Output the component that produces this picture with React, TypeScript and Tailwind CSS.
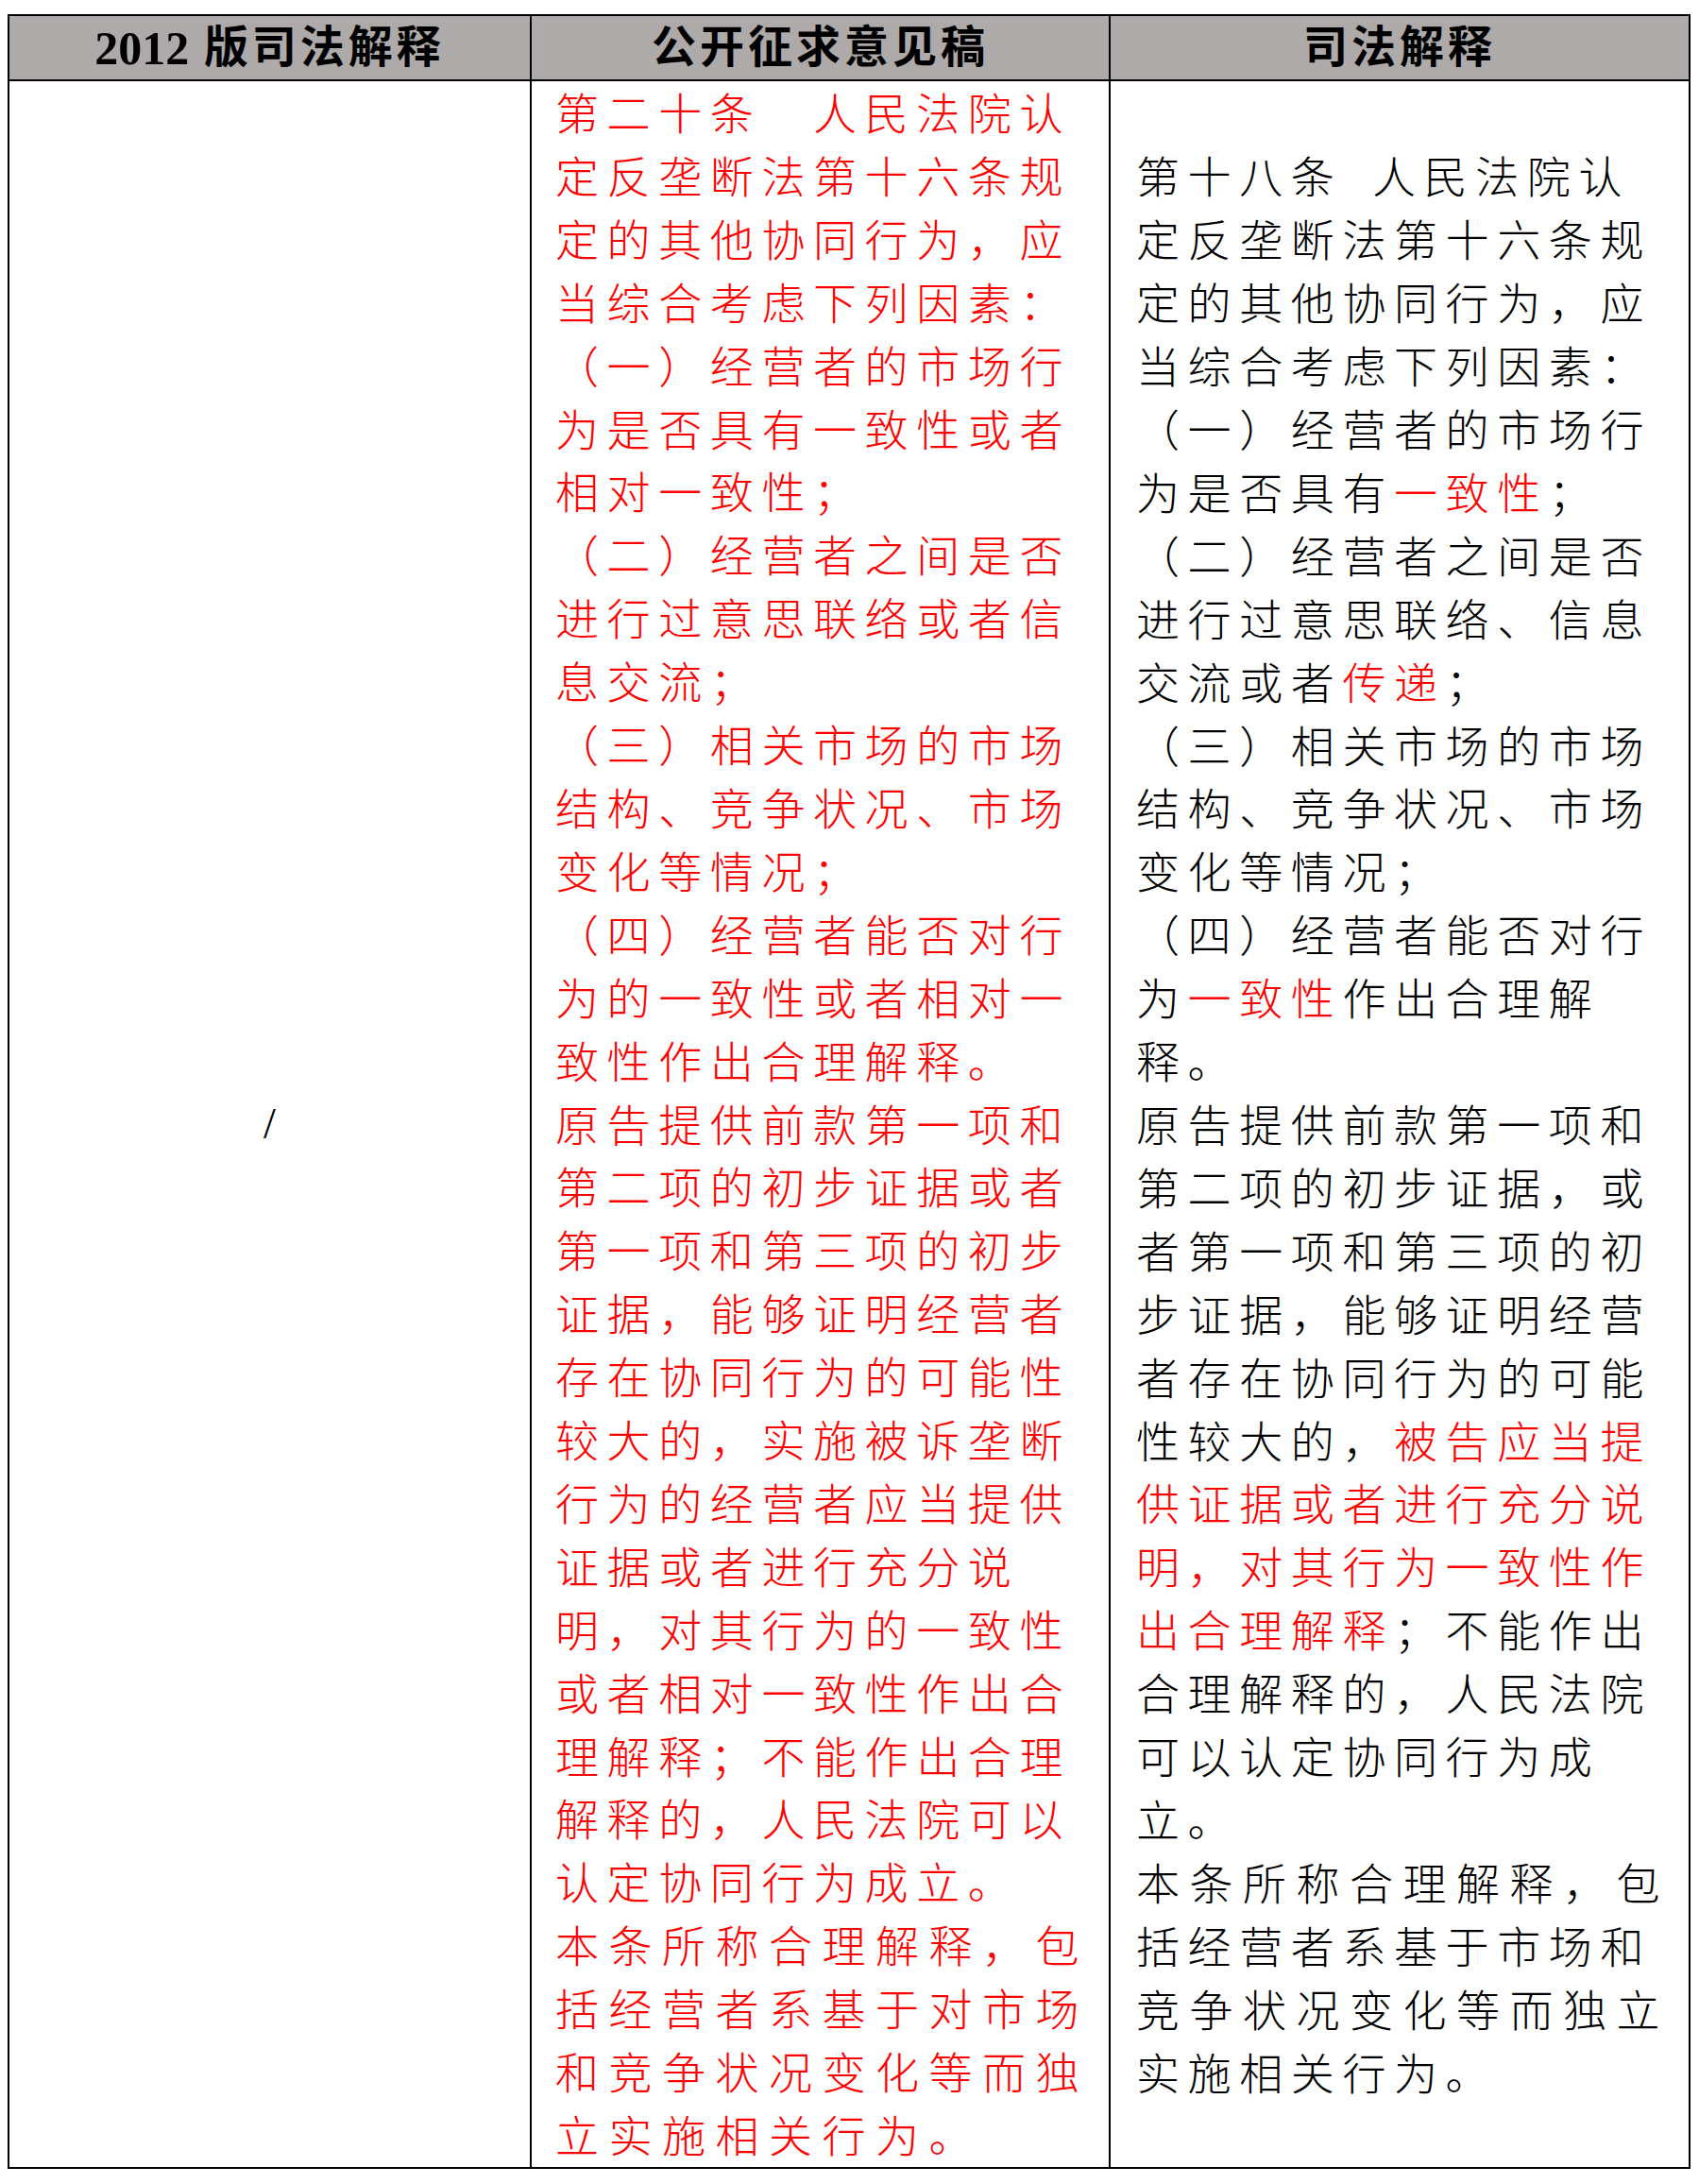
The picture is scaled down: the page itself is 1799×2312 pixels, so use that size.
import React from "react";

const col2: string[] = [
  "第二十条　人民法院认",
  "定反垄断法第十六条规",
  "定的其他协同行为，应",
  "当综合考虑下列因素：",
  "（一）经营者的市场行",
  "为是否具有一致性或者",
  "相对一致性；",
  "（二）经营者之间是否",
  "进行过意思联络或者信",
  "息交流；",
  "（三）相关市场的市场",
  "结构、竞争状况、市场",
  "变化等情况；",
  "（四）经营者能否对行",
  "为的一致性或者相对一",
  "致性作出合理解释。",
  "原告提供前款第一项和",
  "第二项的初步证据或者",
  "第一项和第三项的初步",
  "证据，能够证明经营者",
  "存在协同行为的可能性",
  "较大的，实施被诉垄断",
  "行为的经营者应当提供",
  "证据或者进行充分说",
  "明，对其行为的一致性",
  "或者相对一致性作出合",
  "理解释；不能作出合理",
  "解释的，人民法院可以",
  "认定协同行为成立。",
  "本条所称合理解释，包",
  "括经营者系基于对市场",
  "和竞争状况变化等而独",
  "立实施相关行为。",
];
const col2Wide = new Set([29, 30, 31, 32]);

const col3: string[] = [
  "第十八条\u2002人民法院认",
  "定反垄断法第十六条规",
  "定的其他协同行为，应",
  "当综合考虑下列因素：",
  "（一）经营者的市场行",
  "为是否具有[一致性]；",
  "（二）经营者之间是否",
  "进行过意思联络、信息",
  "交流或者[传递]；",
  "（三）相关市场的市场",
  "结构、竞争状况、市场",
  "变化等情况；",
  "（四）经营者能否对行",
  "为[一致性]作出合理解",
  "释。",
  "原告提供前款第一项和",
  "第二项的初步证据，或",
  "者第一项和第三项的初",
  "步证据，能够证明经营",
  "者存在协同行为的可能",
  "性较大的，[被告应当提]",
  "[供证据或者进行充分说]",
  "[明，对其行为一致性作]",
  "[出合理解释]；不能作出",
  "合理解释的，人民法院",
  "可以认定协同行为成",
  "立。",
  "本条所称合理解释，包",
  "括经营者系基于市场和",
  "竞争状况变化等而独立",
  "实施相关行为。",
];
const col3Wide = new Set([27, 29]);

function renderSegments(s: string) {
  const parts = s.split(/(\[[^\]]+\])/).filter((p) => p.length > 0);
  return parts.map((p, i) =>
    p.startsWith("[") ? (
      <span key={i} className="text-[#ff0000]">
        {p.slice(1, -1)}
      </span>
    ) : (
      <span key={i}>{p}</span>
    )
  );
}

export default function App() {
  return (
    <div className="w-[1799px] min-h-[2312px] bg-white pt-[15px]">
      <div className="ml-[8px] w-[1782px] border-2 border-black">
        {/* header */}
        <div className="flex h-[69px] border-b-2 border-black bg-[#aeaaaa] font-['Liberation_Serif','Noto_Sans_CJK_SC',serif] font-bold text-black">
          <div className="flex w-[553px] items-center justify-center border-r-2 border-black text-[47px] tracking-[4px] leading-none">
            <span className="text-[50px] tracking-normal">2012</span>
            <span>&nbsp;版司法解释</span>
          </div>
          <div className="flex w-[613px] items-center justify-center border-r-2 border-black text-[47px] tracking-[4px] leading-none">
            公开征求意见稿
          </div>
          <div className="flex flex-1 items-center justify-center text-[47px] tracking-[4px] leading-none">
            司法解释
          </div>
        </div>
        {/* body */}
        <div className="flex font-['Noto_Sans_CJK_SC',sans-serif] font-light text-[46px] leading-[66.9px]">
          <div className="flex w-[553px] items-center justify-center border-r-2 border-black font-['Liberation_Serif',serif] font-normal text-black">
            /
          </div>
          <div className="w-[613px] border-r-2 border-black pl-[25px] text-[#ff0000] -mt-[2px] pb-[2px]">
            {col2.map((l, i) => (
              <div
                key={i}
                className={
                  col2Wide.has(i)
                    ? "whitespace-nowrap tracking-[10.5px]"
                    : "whitespace-nowrap tracking-[8.6px]"
                }
              >
                {l}
              </div>
            ))}
          </div>
          <div className="flex flex-1 items-center pl-[27px] text-black">
            <div className="-mt-[3px]">
              {col3.map((l, i) => (
                <div
                  key={i}
                  className={
                    col3Wide.has(i)
                      ? "whitespace-nowrap tracking-[10.5px]"
                      : "whitespace-nowrap tracking-[8.6px]"
                  }
                >
                  {renderSegments(l)}
                </div>
              ))}
            </div>
          </div>
        </div>
      </div>
    </div>
  );
}
